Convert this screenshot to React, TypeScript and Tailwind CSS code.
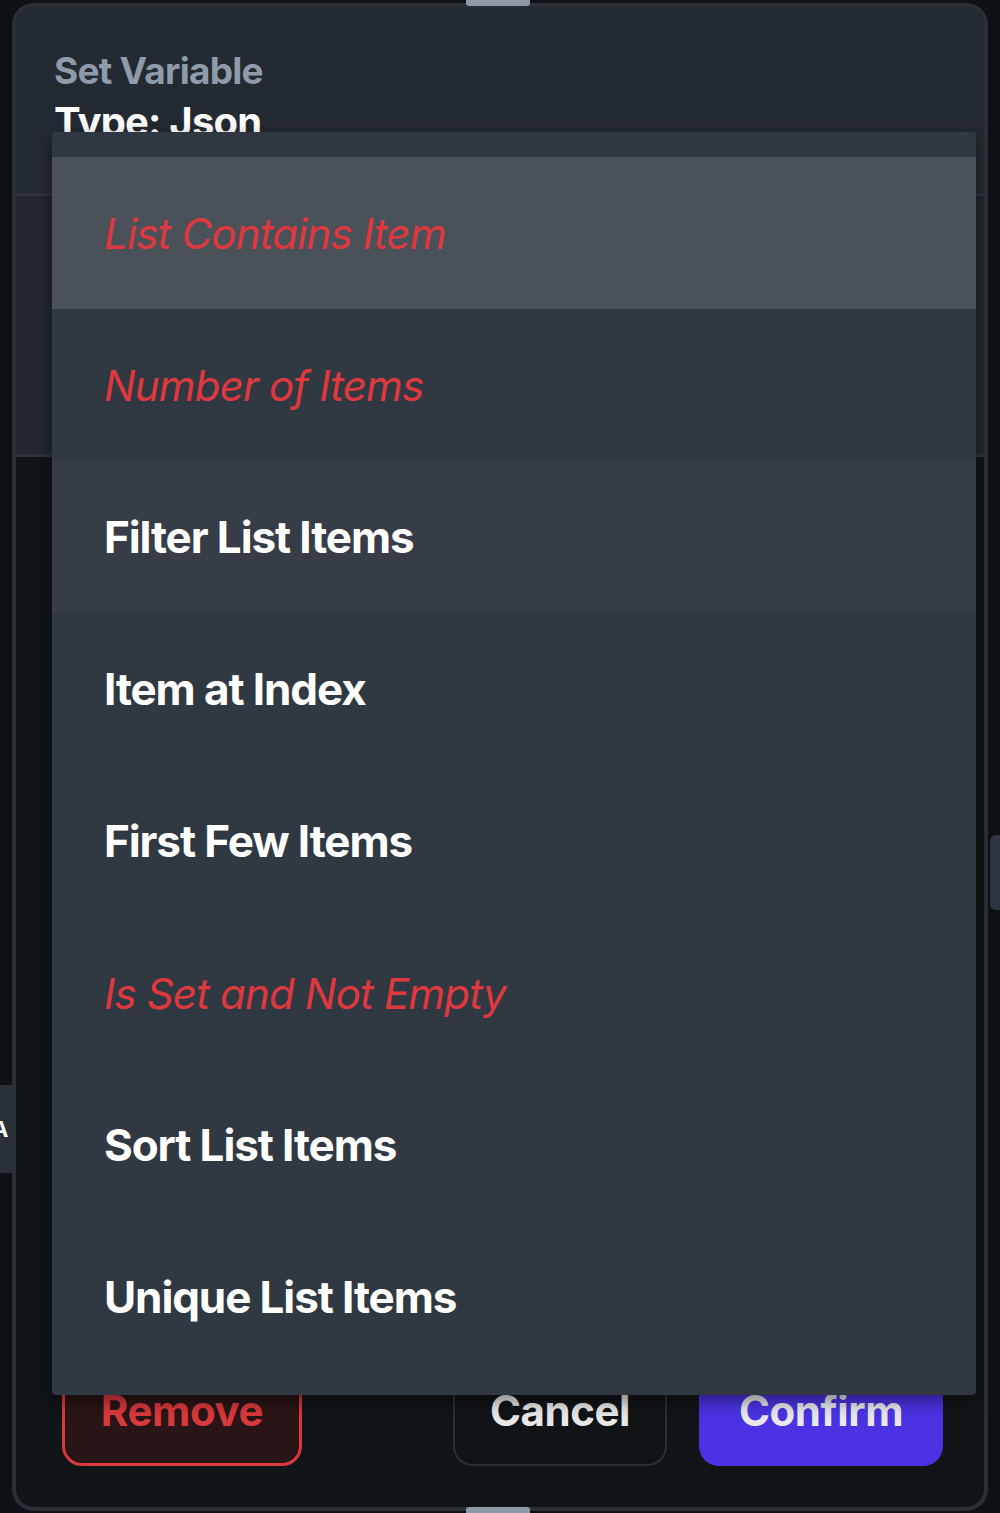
const options = [
  { label: "List Contains Item", disabled: true, tone: "active" },
  { label: "Number of Items", disabled: true, tone: "none" },
  { label: "Filter List Items", disabled: false, tone: "hover" },
  { label: "Item at Index", disabled: false, tone: "none" },
  { label: "First Few Items", disabled: false, tone: "none" },
  { label: "Is Set and Not Empty", disabled: true, tone: "none" },
  { label: "Sort List Items", disabled: false, tone: "none" },
  { label: "Unique List Items", disabled: false, tone: "none" },
];

function OptionRow({ label, disabled, tone }: { label: string; disabled: boolean; tone: string }) {
  const bg =
    tone === "active" ? "bg-[#4a5159]" : tone === "hover" ? "bg-[#363d46]" : "bg-transparent";
  return (
    <div className={`flex h-[152px] items-center px-[52px] ${bg}`}>
      {disabled ? (
        <span className="text-[42px] italic font-normal tracking-[-0.02em] text-[#e0383f]">
          {label}
        </span>
      ) : (
        <span className="text-[44px] font-bold tracking-[-0.025em] text-white">{label}</span>
      )}
    </div>
  );
}

export default function App() {
  return (
    <div
      className="relative h-[1513px] w-[1000px] overflow-hidden bg-[#0e1215] px-[12px] pt-[3px]"
      style={{ fontFamily: "Inter, 'Noto Sans', sans-serif" }}
    >
      {/* bits of the page behind the sheet */}
      <div className="absolute left-0 top-[1085px] flex h-[88px] w-[12px] items-center overflow-hidden bg-[#2a3038]">
        <span className="-ml-[8px] text-[22px] font-bold text-white">A</span>
      </div>
      <div className="absolute right-0 top-[835px] h-[75px] w-[10px] rounded-l-md bg-[#2d3543]" />

      {/* sheet */}
      <div className="flex h-[1508px] flex-col overflow-hidden rounded-[22px] border-[4px] border-[#2a3037] bg-[#121518]">
        <div className="h-[186px] bg-[#242a31] px-[38px] pt-[41px]">
          <div className="text-[37px] font-bold leading-[46px] tracking-[-0.02em] text-[#8f9bab]">
            Set Variable
          </div>
          <div className="text-[40px] font-bold leading-[56px] tracking-[-0.02em] text-white">
            Type: Json
          </div>
        </div>
        <div className="h-[264px] border-y-[3px] border-[#2c333b] bg-[#22282e]" />
        <div className="flex-1" />
        <div className="flex items-end justify-between pb-[41px] pl-[46px] pr-[41px]">
          <button className="flex h-[100px] w-[240px] items-center justify-center rounded-[20px] border-[3px] border-[#d8393d] bg-[#2a1516] pb-[12px] text-[42px] font-bold tracking-[-0.01em] text-[#d8393d]">
            Remove
          </button>
          <div className="flex gap-[32px]">
            <button className="flex h-[100px] w-[214px] items-center justify-center rounded-[20px] border-[2px] border-[#2b3036] bg-[#111417] pb-[12px] text-[42px] font-bold tracking-[-0.01em] text-[#e8e8e8]">
              Cancel
            </button>
            <button className="flex h-[100px] w-[244px] items-center justify-center rounded-[20px] bg-[#4a33e3] pb-[12px] text-[42px] font-bold tracking-[-0.01em] text-[#e8e8ee]">
              Confirm
            </button>
          </div>
        </div>
      </div>

      {/* grab handles */}
      <div className="absolute left-[466px] top-0 h-[6px] w-[64px] rounded-b-[3px] bg-[#8e99a5]" />
      <div className="absolute bottom-0 left-[466px] h-[6px] w-[64px] rounded-t-[3px] bg-[#8e99a5]" />

      {/* dropdown menu */}
      <div className="absolute left-[52px] top-[132px] flex h-[1263px] w-[924px] flex-col rounded-[4px] bg-[#303941] pb-[22px] pt-[25px] shadow-[0_6px_18px_rgba(0,0,0,0.45)]">
        {options.map((o) => (
          <OptionRow key={o.label} label={o.label} disabled={o.disabled} tone={o.tone} />
        ))}
      </div>
    </div>
  );
}
